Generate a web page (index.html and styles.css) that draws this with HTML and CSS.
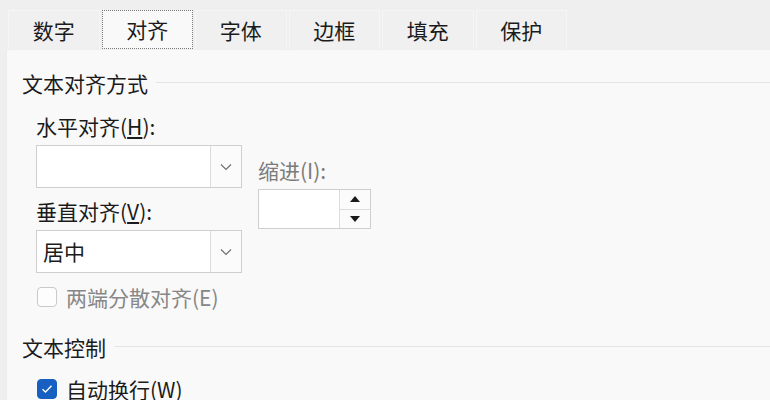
FILE: index.html
```html
<!DOCTYPE html>
<html lang="zh-CN">
<head>
<meta charset="utf-8">
<link rel="stylesheet" href="styles.css">
</head>
<body>
<div class="tabs">
  <div class="tab">数字</div>
  <div class="tab active">对齐</div>
  <div class="tab">字体</div>
  <div class="tab">边框</div>
  <div class="tab">填充</div>
  <div class="tab">保护</div>
</div>
<div class="panel">
  <div class="group-head"><span>文本对齐方式</span><span class="rule"></span></div>
  <div class="align-grid">
    <div class="col-left">
      <div class="label">水平对齐(<u>H</u>):</div>
      <div class="combo">
        <span class="combo-text"></span>
        <span class="combo-btn"><svg width="12" height="8" viewBox="0 0 12 8"><path d="M1 1.5 L6 6.5 L11 1.5" fill="none" stroke="#707070" stroke-width="1.2"/></svg></span>
      </div>
      <div class="label label-2">垂直对齐(<u>V</u>):</div>
      <div class="combo">
        <span class="combo-text">居中</span>
        <span class="combo-btn"><svg width="12" height="8" viewBox="0 0 12 8"><path d="M1 1.5 L6 6.5 L11 1.5" fill="none" stroke="#707070" stroke-width="1.2"/></svg></span>
      </div>
    </div>
    <div class="col-right">
      <div class="label muted">缩进(I):</div>
      <div class="spin">
        <span class="spin-text"></span>
        <span class="spin-btns">
          <span class="spin-btn"><svg width="10" height="6" viewBox="0 0 10 6"><path d="M5 0 L10 6 L0 6 Z" fill="#1a1a1a"/></svg></span>
          <span class="spin-btn"><svg width="10" height="6" viewBox="0 0 10 6"><path d="M0 0 L10 0 L5 6 Z" fill="#1a1a1a"/></svg></span>
        </span>
      </div>
    </div>
  </div>
  <div class="check-row disabled"><span class="box"></span><span>两端分散对齐(E)</span></div>
  <div class="group-head head-2"><span>文本控制</span><span class="rule"></span></div>
  <div class="check-row checked-row"><span class="box checked"><svg width="12" height="10" viewBox="0 0 12 10"><path d="M1.5 5.2 L4.5 8 L10.5 1.8" fill="none" stroke="#fff" stroke-width="1.4"/></svg></span><span>自动换行(<u>W</u>)</span></div>
</div>
</body>
</html>
```

FILE: styles.css
```css
html, body {
  margin: 0;
  padding: 0;
  height: 100%;
  overflow: hidden;
}
body {
  background: #efefef;
  font-family: "Noto Sans CJK SC", "Microsoft YaHei", sans-serif;
  font-size: 21px;
  color: #1b1b1b;
  display: flex;
  flex-direction: column;
}
.tabs {
  display: flex;
  gap: 2px;
  padding: 10px 0 0 8px;
  height: 50px;
  box-sizing: border-box;
  flex: none;
}
.tab {
  width: 91.5px;
  height: 39px;
  box-sizing: border-box;
  border: 1px solid #f6f6f6;
  border-bottom: none;
  background: #f0f0f0;
  display: flex;
  align-items: center;
  justify-content: center;
  line-height: 1;
}
.tab.active {
  background: #f9f9f9;
  border: 1px dotted #7a7a7a;
  height: 39px;
}
.panel {
  flex: 1;
  margin-left: 6px;
  background: #f9f9f9;
  border-left: 1px solid #ececec;
  padding: 19px 0 0 15px;
}
.group-head {
  display: flex;
  align-items: center;
  height: 28px;
  line-height: 28px;
}
.group-head .rule {
  flex: 1;
  border-top: 1px solid #e4e4e4;
  margin-left: 8px;
  margin-top: -1px;
}
.head-2 {
  margin-top: 22px;
}
.align-grid {
  display: flex;
  gap: 16px;
  padding-left: 14px;
  margin-top: 15px;
}
.col-left {
  width: 206px;
}
.col-right {
  width: 113px;
  padding-top: 44px;
}
.label {
  height: 28px;
  line-height: 28px;
  white-space: nowrap;
}
.label-2 {
  margin-top: 9px;
}
.muted {
  color: #7b7b7b;
}
.combo {
  margin-top: 5px;
  height: 43px;
  box-sizing: border-box;
  border: 1px solid #cfcfcf;
  background: #ffffff;
  display: flex;
}
.combo-text {
  flex: 1;
  line-height: 41px;
  padding-left: 6px;
}
.combo-btn {
  width: 30px;
  border-left: 1px solid #dcdcdc;
  background: #fbfbfb;
  display: flex;
  align-items: center;
  justify-content: center;
}
.spin {
  margin-top: 5px;
  height: 40px;
  box-sizing: border-box;
  border: 1px solid #cfcfcf;
  background: #ffffff;
  display: flex;
}
.spin-text {
  flex: 1;
}
.spin-btns {
  width: 30px;
  display: flex;
  flex-direction: column;
  border-left: 1px solid #dcdcdc;
}
.spin-btn {
  flex: 1;
  display: flex;
  align-items: center;
  justify-content: center;
  background: #fbfbfb;
}
.spin-btn + .spin-btn {
  border-top: 1px solid #dcdcdc;
}
.check-row {
  display: flex;
  align-items: center;
  height: 28px;
  padding-left: 15px;
  margin-top: 10px;
  white-space: nowrap;
}
.check-row.disabled {
  color: #878787;
}
.checked-row {
  margin-top: 14px;
}
.box {
  width: 20px;
  height: 20px;
  box-sizing: border-box;
  border: 1px solid #c9c9c9;
  border-radius: 4px;
  background: #fdfdfd;
  margin-right: 9px;
  display: flex;
  align-items: center;
  justify-content: center;
}
.box.checked {
  background: #1760c1;
  border-color: #1760c1;
}
u {
  text-underline-offset: 2px;
}
```
